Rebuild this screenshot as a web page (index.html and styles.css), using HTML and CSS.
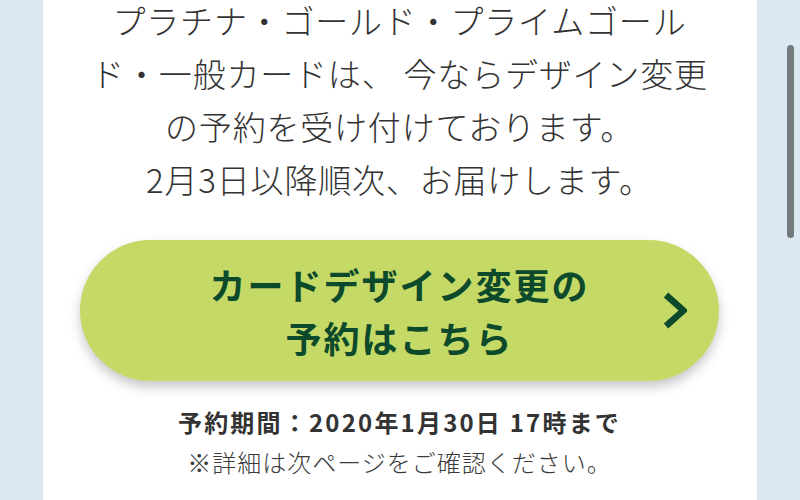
FILE: index.html
```html
<!DOCTYPE html>
<html lang="ja">
<head>
<meta charset="utf-8">
<link rel="stylesheet" href="styles.css">
<title>カードデザイン変更</title>
</head>
<body>
<div class="page">
  <main class="card">
    <p class="lead">プラチナ・ゴールド・プライムゴール<br>ド・一般カードは、 今ならデザイン変更<br>の予約を受け付けております。<br>2月3日以降順次、お届けします。</p>
    <a class="cta" href="#">
      <span class="cta-text">カードデザイン変更の<br>予約はこちら</span>
      <svg class="chev" width="24" height="37" viewBox="0 0 24 37" aria-hidden="true"><polyline points="3,3 20.5,18.5 3,34" fill="none" stroke="#0c4a2b" stroke-width="6.5" stroke-linejoin="miter"/></svg>
    </a>
    <div class="notes">
      <p class="period">予約期間：2020年1月30日 17時まで</p>
      <p class="detail">※詳細は次ページをご確認ください。</p>
    </div>
  </main>
  <div class="scrollbar"></div>
</div>
</body>
</html>
```
FILE: styles.css
```css
html, body {
  margin: 0;
  padding: 0;
}
body {
  background: #dce9f3;
  font-family: "Noto Sans CJK JP", "Noto Sans", sans-serif;
  color: #333;
  height: 500px;
  overflow: hidden;
}
.page {
  position: relative;
  display: flex;
  height: 500px;
}
.card {
  width: 714px;
  margin-left: 43px;
  margin-top: -6px;
  background: #fff;
  padding: 0 38px 0 37px;
  box-sizing: border-box;
  display: flex;
  flex-direction: column;
  align-items: center;
}
.lead {
  margin: 0;
  font-size: 33px;
  font-weight: 300;
  line-height: 53px;
  letter-spacing: 0.8px;
  text-align: center;
  color: #333;
}
.cta {
  margin-top: 34px;
  width: 639px;
  height: 141px;
  border-radius: 71px;
  background: #c4d966;
  box-shadow: 0 6px 12px rgba(0, 0, 0, 0.22);
  display: flex;
  align-items: center;
  justify-content: center;
  position: relative;
  text-decoration: none;
}
.cta-text {
  font-size: 36px;
  font-weight: 700;
  line-height: 53px;
  letter-spacing: 2px;
  color: #0c4a2b;
  text-align: center;
}
.chev {
  position: absolute;
  right: 32px;
  top: 52px;
}
.notes {
  margin-top: 21px;
  text-align: center;
}
.notes p {
  margin: 0;
  line-height: 40px;
}
.period {
  font-size: 24px;
  font-weight: 700;
  letter-spacing: 2.2px;
  color: #333;
}
.detail {
  font-size: 24px;
  font-weight: 300;
  letter-spacing: 1px;
  color: #3a3a3a;
}
.scrollbar {
  position: absolute;
  left: 787px;
  top: 45px;
  width: 7px;
  height: 193px;
  border-radius: 4px;
  background: #737b7c;
}
```
